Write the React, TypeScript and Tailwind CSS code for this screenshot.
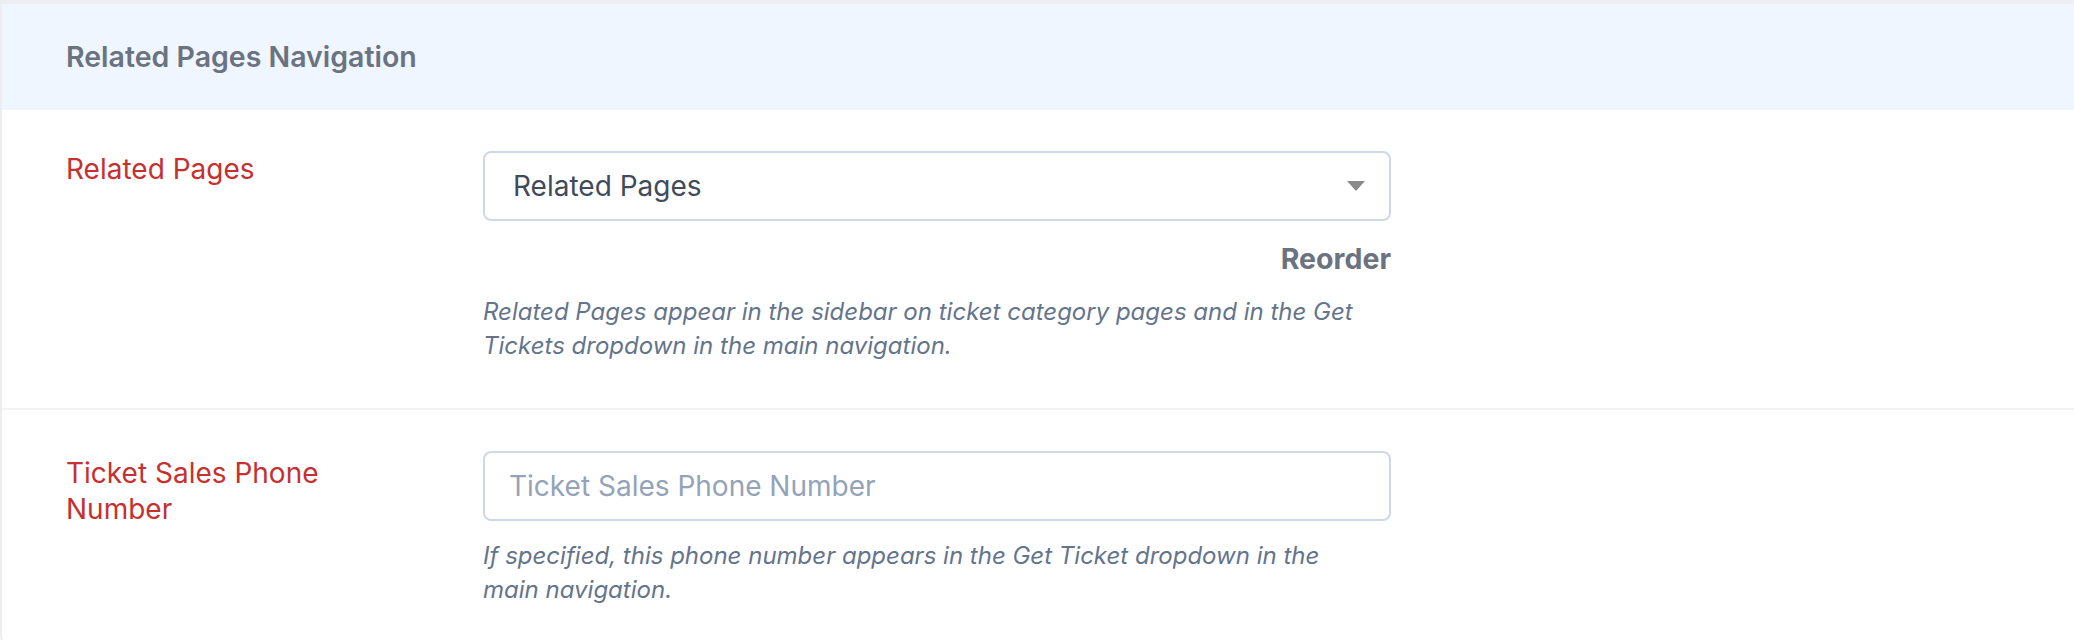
export default function App() {
  return (
    <div className="min-h-screen bg-white font-['Inter','Noto_Sans',sans-serif]">
      <div className="border-l-2 border-t-4 border-[#eceef1] rounded-bl-xl overflow-hidden">
        <div className="h-[106px] bg-[#eff6ff] flex items-center px-[64px]">
          <h2 className="text-[28.5px] font-semibold text-[#6b7280]">Related Pages Navigation</h2>
        </div>

        <div className="flex px-[64px] pt-[41px] pb-[45px] border-b-2 border-[#f2f3f5]">
          <div className="w-[417px] shrink-0 pr-[120px] text-[28px] leading-[36px] text-[#c53030]">
            Related Pages
          </div>
          <div className="w-[908px]">
            <div className="h-[70px] border-2 border-[#cfd8e3] rounded-[8px] pl-[28px] pr-[24px] flex items-center justify-between">
              <span className="text-[28px] text-[#3f4b5b]">Related Pages</span>
              <svg width="18" height="10" viewBox="0 0 18 10">
                <polygon points="0,0 18,0 9,10" fill="#8a8a8a" />
              </svg>
            </div>
            <div className="mt-[22px] text-right text-[28.5px] leading-[32px] font-bold text-[#6b7280]">Reorder</div>
            <p className="mt-[20px] w-[890px] italic text-[24px] leading-[34px] text-[#64748b]">
              Related Pages appear in the sidebar on ticket category pages and in the Get Tickets dropdown in the main
              navigation.
            </p>
          </div>
        </div>

        <div className="flex px-[64px] pt-[41px] pb-[41px]">
          <div className="w-[417px] shrink-0 pr-[120px] pt-[4px] text-[28px] leading-[36px] text-[#c53030]">
            Ticket Sales Phone Number
          </div>
          <div className="w-[908px]">
            <input
              type="text"
              placeholder="Ticket Sales Phone Number"
              className="w-full h-[70px] border-2 border-[#cfd8e3] rounded-[8px] px-[24px] text-[28px] text-[#3f4b5b] placeholder:text-[#94a3b8] outline-none"
            />
            <p className="mt-[18px] w-[890px] italic text-[24px] leading-[34px] text-[#64748b]">
              If specified, this phone number appears in the Get Ticket dropdown in the main navigation.
            </p>
          </div>
        </div>
      </div>
    </div>
  );
}
